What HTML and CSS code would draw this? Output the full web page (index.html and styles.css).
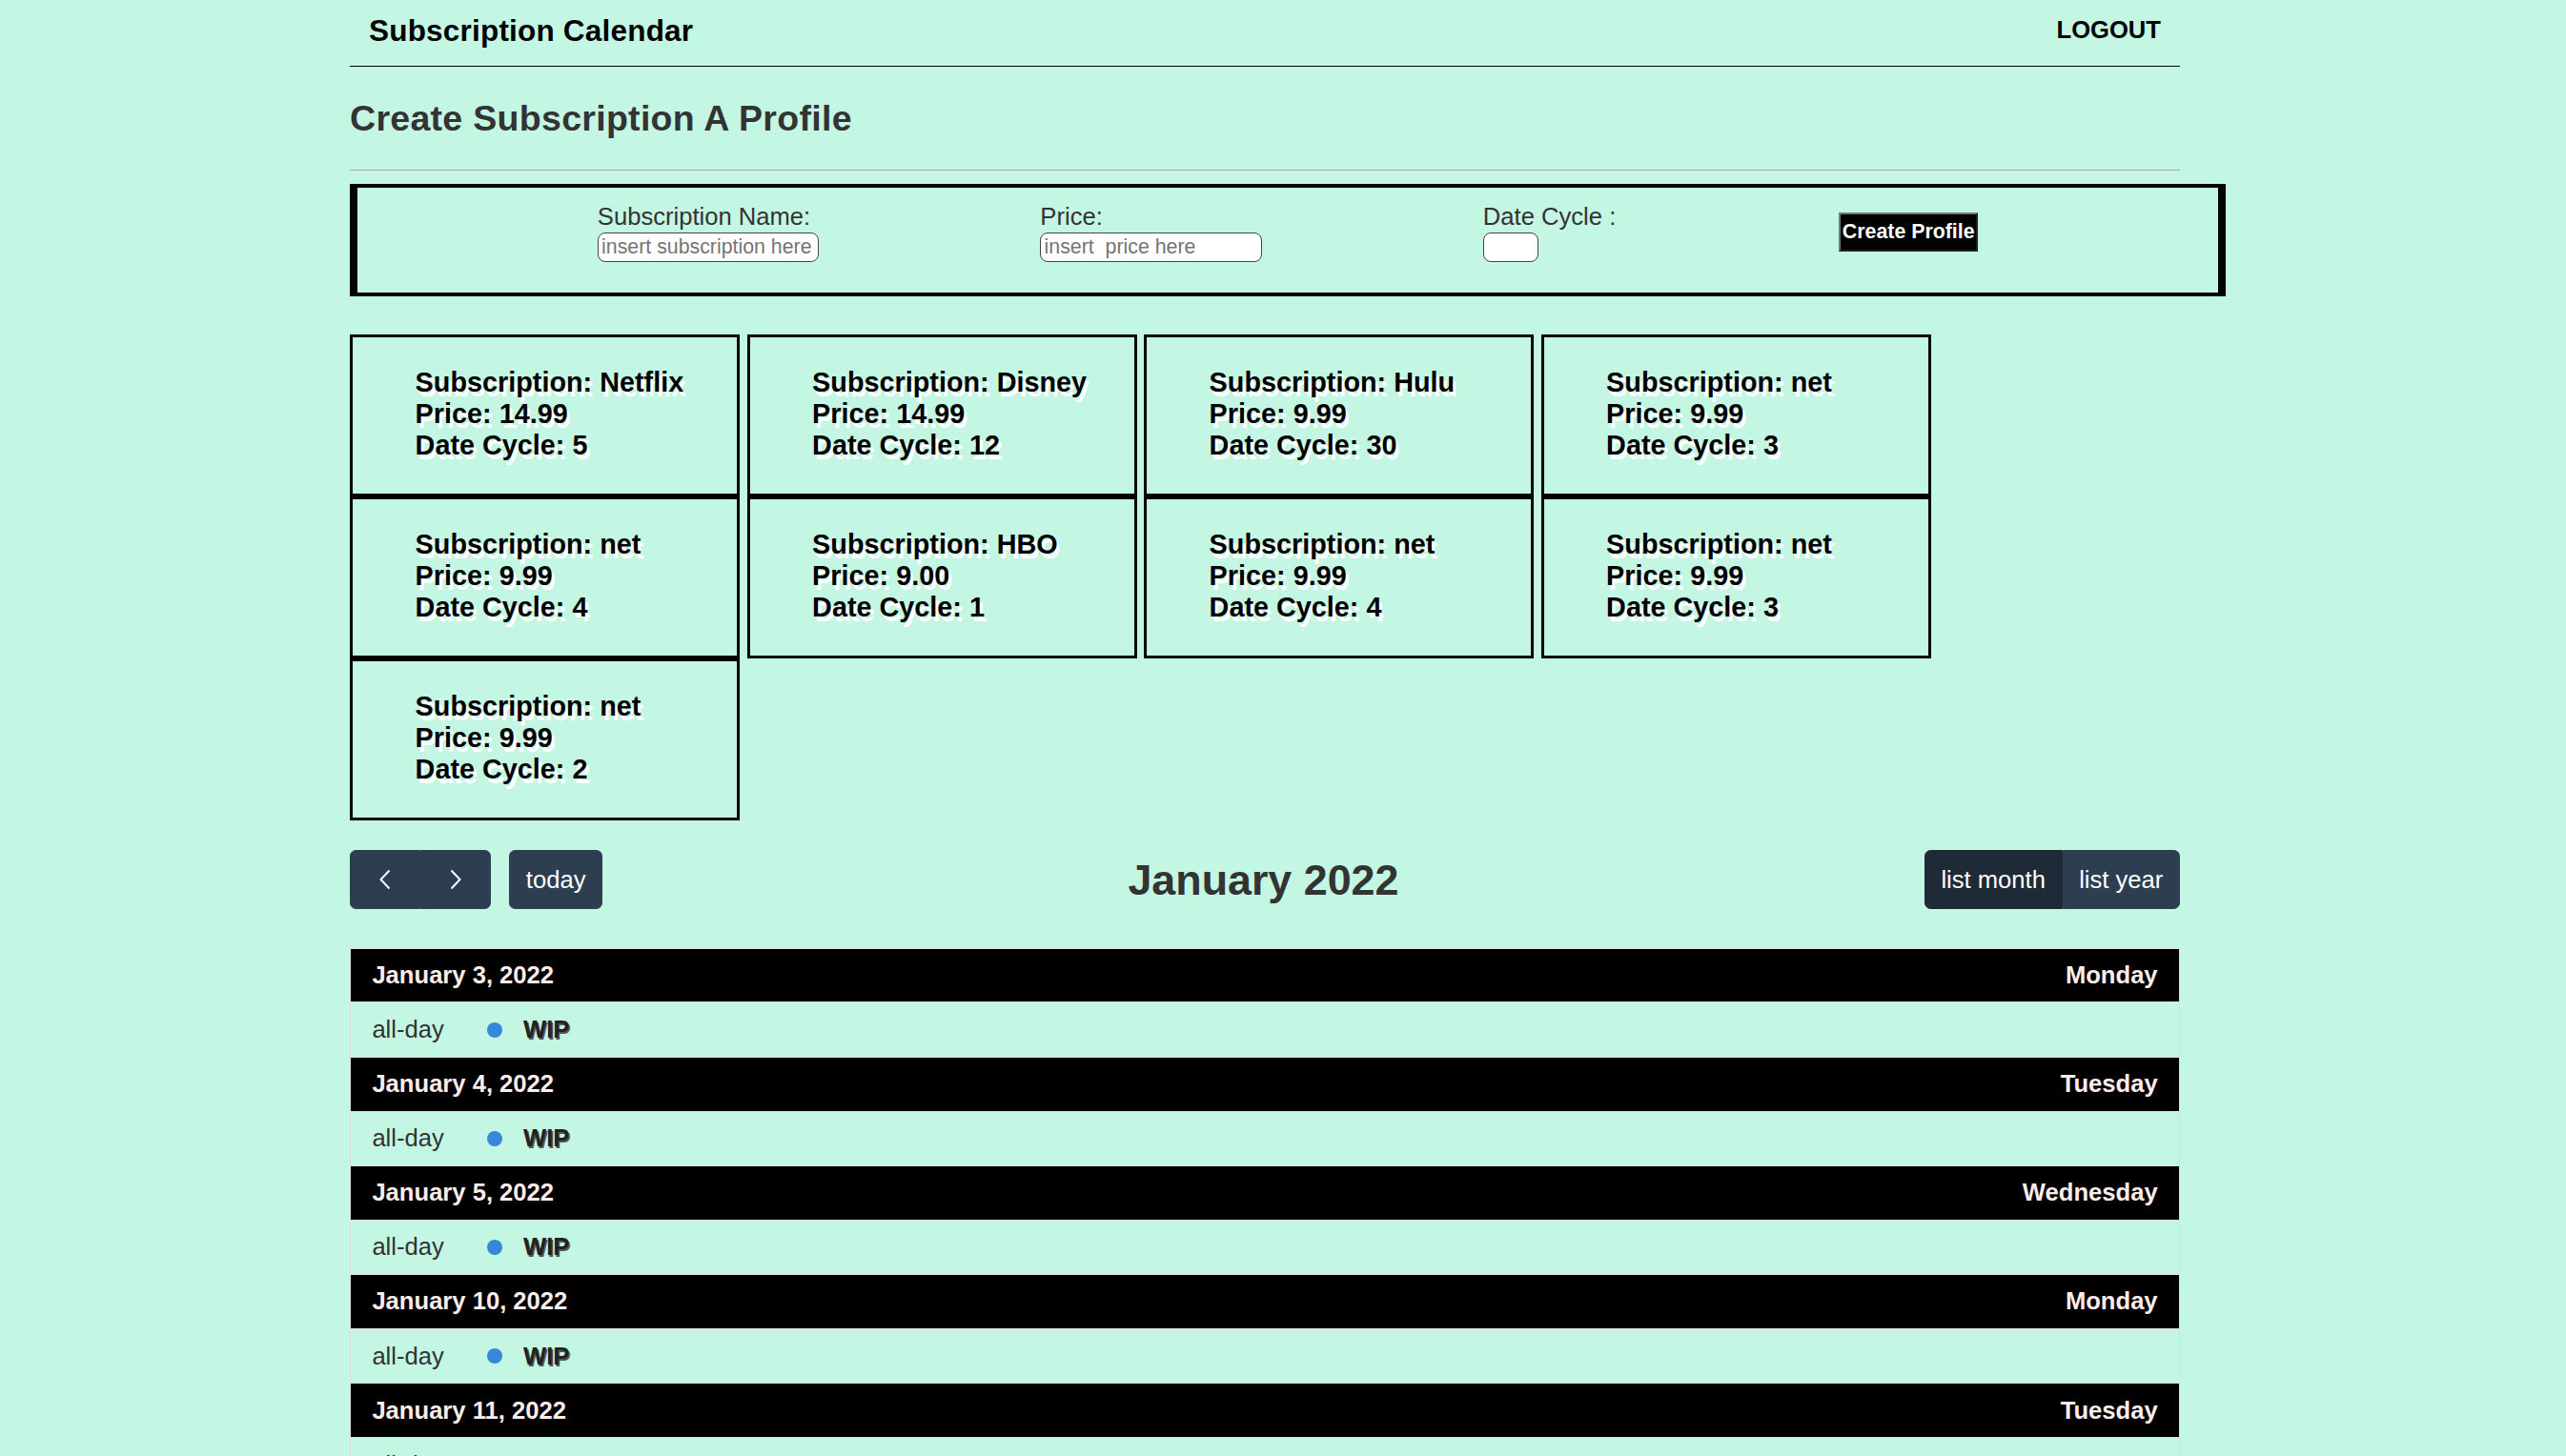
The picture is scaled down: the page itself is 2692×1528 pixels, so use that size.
FILE: index.html
```html
<!DOCTYPE html>
<html lang="en">
<head>
<meta charset="utf-8">
<title>Subscription Calendar</title>
<link rel="stylesheet" href="styles.css">
</head>
<body>
<div class="page">
  <header class="topbar">
    <span class="brand">Subscription Calendar</span>
    <a class="logout">LOGOUT</a>
  </header>

  <h2 class="page-title">Create Subscription A Profile</h2>
  <hr class="divider">

  <form class="create-form">
    <div class="field">
      <label>Subscription Name:</label>
      <input class="input input-wide" type="text" placeholder="insert subscription here">
    </div>
    <div class="field">
      <label>Price:</label>
      <input class="input input-wide" type="text" placeholder="insert  price here">
    </div>
    <div class="field">
      <label>Date Cycle :</label>
      <input class="input input-narrow" type="text">
    </div>
    <button class="create-btn" type="button">Create Profile</button>
  </form>

  <section class="cards">
    <div class="card"><div>Subscription: Netflix</div><div>Price: 14.99</div><div>Date Cycle: 5</div></div>
    <div class="card"><div>Subscription: Disney</div><div>Price: 14.99</div><div>Date Cycle: 12</div></div>
    <div class="card"><div>Subscription: Hulu</div><div>Price: 9.99</div><div>Date Cycle: 30</div></div>
    <div class="card"><div>Subscription: net</div><div>Price: 9.99</div><div>Date Cycle: 3</div></div>
    <div class="card"><div>Subscription: net</div><div>Price: 9.99</div><div>Date Cycle: 4</div></div>
    <div class="card"><div>Subscription: HBO</div><div>Price: 9.00</div><div>Date Cycle: 1</div></div>
    <div class="card"><div>Subscription: net</div><div>Price: 9.99</div><div>Date Cycle: 4</div></div>
    <div class="card"><div>Subscription: net</div><div>Price: 9.99</div><div>Date Cycle: 3</div></div>
    <div class="card"><div>Subscription: net</div><div>Price: 9.99</div><div>Date Cycle: 2</div></div>
  </section>

  <section class="cal">
    <div class="toolbar">
      <div class="toolbar-chunk">
        <div class="btn-group">
          <button class="btn nav-btn" type="button" aria-label="prev">
            <svg width="14" height="22" viewBox="0 0 14 22"><polyline points="11.5,1.5 2.5,11 11.5,20.5" fill="none" stroke="#fff" stroke-width="2"/></svg>
          </button>
          <button class="btn nav-btn" type="button" aria-label="next">
            <svg width="14" height="22" viewBox="0 0 14 22"><polyline points="2.5,1.5 11.5,11 2.5,20.5" fill="none" stroke="#fff" stroke-width="2"/></svg>
          </button>
        </div>
        <button class="btn today-btn" type="button">today</button>
      </div>
      <h2 class="cal-title">January 2022</h2>
      <div class="toolbar-chunk">
        <div class="btn-group">
          <button class="btn active" type="button">list month</button>
          <button class="btn" type="button">list year</button>
        </div>
      </div>
    </div>

    <div class="list">
      <div class="day"><span>January 3, 2022</span><span>Monday</span></div>
      <div class="event"><span class="ev-time">all-day</span><span class="ev-dot"></span><span class="ev-title">WIP</span></div>
      <div class="day"><span>January 4, 2022</span><span>Tuesday</span></div>
      <div class="event"><span class="ev-time">all-day</span><span class="ev-dot"></span><span class="ev-title">WIP</span></div>
      <div class="day"><span>January 5, 2022</span><span>Wednesday</span></div>
      <div class="event"><span class="ev-time">all-day</span><span class="ev-dot"></span><span class="ev-title">WIP</span></div>
      <div class="day"><span>January 10, 2022</span><span>Monday</span></div>
      <div class="event"><span class="ev-time">all-day</span><span class="ev-dot"></span><span class="ev-title">WIP</span></div>
      <div class="day"><span>January 11, 2022</span><span>Tuesday</span></div>
      <div class="event"><span class="ev-time">all-day</span><span class="ev-dot"></span><span class="ev-title">WIP</span></div>
    </div>
  </section>
</div>
</body>
</html>
```

FILE: styles.css
```css
* {
  box-sizing: border-box;
}

body {
  margin: 0;
  background: #c3f6e3;
  font-family: "Liberation Sans", Arial, Helvetica, sans-serif;
  font-size: 25.6px;
  color: #333;
}

.page {
  width: 1920px;
  margin-left: 367px;
}

/* top bar */
.topbar {
  display: flex;
  justify-content: space-between;
  align-items: flex-start;
  height: 69.6px;
  padding: 14px 20px 0 20px;
  border-bottom: 1.6px solid #000;
}

.brand {
  font-size: 31.5px;
  font-weight: bold;
  letter-spacing: 0.2px;
  color: #000;
}

.logout {
  margin-top: 3px;
  font-size: 25.6px;
  font-weight: bold;
  color: #000;
}

.page-title {
  margin: 33px 0 0;
  font-size: 37.5px;
  letter-spacing: 0.3px;
  font-weight: bold;
  line-height: normal;
  color: #333;
}

.divider {
  margin: 32px 0 0;
  height: 0;
  border: 0;
  border-top: 1.6px solid #a8a8a8;
}

/* create form */
.create-form {
  margin-top: 14.4px;
  width: 1968px;
  display: flex;
  justify-content: center;
  align-items: flex-start;
  gap: 232px;
  padding: 16px 0 32px;
  border-style: solid;
  border-color: #000;
  border-width: 4px 8px;
}

.field label {
  display: block;
  line-height: normal;
  color: #333;
}

.input {
  display: block;
  margin-top: 1.6px;
  height: 31px;
  padding: 1.6px 3.2px;
  font-family: "Liberation Sans", Arial, Helvetica, sans-serif;
  font-size: 21.33px;
  color: #333;
  background: #fff;
  border: 1.6px solid #444;
  border-radius: 8px;
}

.input::placeholder {
  color: #757575;
}

.input-wide {
  width: 232.5px;
}

.input-narrow {
  width: 58px;
}

.create-btn {
  margin-top: 10px;
  margin-left: 2px;
  height: 41px;
  padding: 6px 1.6px;
  background: #000;
  color: #fff;
  font-family: "Liberation Sans", Arial, Helvetica, sans-serif;
  font-size: 21.33px;
  font-weight: bold;
  border: 2px outset #767676;
}

/* cards */
.cards {
  margin-top: 40px;
  display: grid;
  grid-template-columns: repeat(4, 409px);
  column-gap: 7.5px;
}

.card {
  height: 170px;
  padding: 31px 0 0 65.6px;
  border: 3.2px solid #000;
  font-size: 28.8px;
  font-weight: bold;
  line-height: 33.4px;
  color: #000;
  text-shadow: 3px 5px 0 #fff;
}

/* calendar */
.cal {
  margin-top: 31.5px;
}

.toolbar {
  display: flex;
  justify-content: space-between;
  align-items: center;
}

.toolbar-chunk {
  display: flex;
  align-items: center;
}

.btn-group {
  display: inline-flex;
}

.btn {
  height: 62px;
  padding: 10.24px 16.64px;
  font-family: "Liberation Sans", Arial, Helvetica, sans-serif;
  font-size: 25.6px;
  line-height: 1.5;
  color: #fff;
  background: #2c3e50;
  border: 1.6px solid #2c3e50;
  border-radius: 6.4px;
}

.btn-group .btn:first-child {
  border-radius: 6.4px 0 0 6.4px;
}

.btn-group .btn:last-child {
  border-radius: 0 6.4px 6.4px 0;
}

.nav-btn {
  width: 74px;
  padding: 0;
  display: flex;
  align-items: center;
  justify-content: center;
}

.today-btn {
  margin-left: 19.2px;
}

.btn.active {
  background: #1e2a36;
  border-color: #1e2a36;
}

.cal-title {
  margin: 0;
  font-size: 44.8px;
  font-weight: bold;
  color: #333;
}

.list {
  margin-top: 40.5px;
  border-left: 1.6px solid #ddd;
  border-right: 1.6px solid #ddd;
}

.day {
  display: flex;
  justify-content: space-between;
  padding: 13.4px 22.4px;
  line-height: normal;
  background: #000;
  color: #fcecea;
  font-weight: bold;
  border-top: 1.6px solid #ddd;
}

.event {
  display: flex;
  align-items: center;
  padding: 13.7px 22.4px;
  line-height: normal;
  border-top: 1.6px solid #ddd;
}

.ev-time {
  color: #333;
}

.ev-dot {
  width: 16px;
  height: 16px;
  margin: 0 22.4px 0 44.8px;
  border-radius: 50%;
  background: #3788d8;
}

.ev-title {
  font-weight: bold;
  color: #222;
  text-shadow: 1.6px 1.6px 0 #555;
}
```
